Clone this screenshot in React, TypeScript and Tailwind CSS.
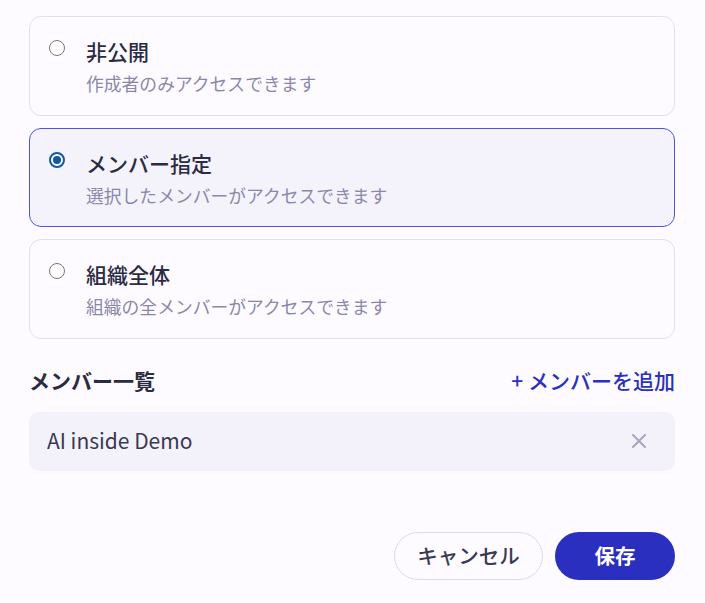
import React, { useState } from 'react'

type Scope = 'private' | 'members' | 'org'

const options: { id: Scope; title: string; desc: string }[] = [
  { id: 'private', title: '非公開', desc: '作成者のみアクセスできます' },
  { id: 'members', title: 'メンバー指定', desc: '選択したメンバーがアクセスできます' },
  { id: 'org', title: '組織全体', desc: '組織の全メンバーがアクセスできます' },
]

function Radio({ checked }: { checked: boolean }) {
  return (
    <span
      className={
        checked
          ? 'mt-[3px] flex h-4 w-4 shrink-0 items-center justify-center rounded-full border-2 border-[#11589f] bg-white'
          : 'mt-[3px] flex h-4 w-4 shrink-0 items-center justify-center rounded-full border-[1.5px] border-[#767676] bg-white'
      }
    >
      {checked && <span className="h-2 w-2 rounded-full bg-[#11589f]" />}
    </span>
  )
}

export default function App() {
  const [scope, setScope] = useState<Scope>('members')

  return (
    <div
      className="min-h-screen bg-[#fdfbff] pl-[29px] pr-[30px] pt-4 pb-[23px]"
      style={{ fontFamily: '"Noto Sans CJK JP", "Noto Sans", sans-serif' }}
    >
      <div className="flex flex-col gap-3">
        {options.map((o) => {
          const active = scope === o.id
          return (
            <button
              key={o.id}
              type="button"
              onClick={() => setScope(o.id)}
              className={
                active
                  ? 'flex items-start rounded-xl border border-[#4b56dc] bg-[#f4f3fc] pl-[19px] pt-5 pb-[19.5px] text-left'
                  : 'flex items-start rounded-xl border border-[#e1deee] bg-[#fdfbff] pl-[19px] pt-5 pb-[19.5px] text-left'
              }
            >
              <Radio checked={active} />
              <div className="ml-[21px] flex flex-col">
                <span className="text-[21px] leading-7 font-medium text-[#2c2b44]">{o.title}</span>
                <span className="mt-[6px] text-[17.8px] leading-6 text-[#8a88a8]">{o.desc}</span>
              </div>
            </button>
          )
        })}
      </div>

      <div className="mt-[27px] flex items-center justify-between">
        <h2 className="text-[21px] leading-7 font-bold text-[#2c2b3f]">メンバー一覧</h2>
        <button type="button" className="text-[21px] leading-7 font-medium text-[#2a30bf]">
          + メンバーを追加
        </button>
      </div>

      <div className="mt-[18px] flex h-[59px] items-center justify-between rounded-[10px] bg-[#f3f2fb] pl-[18px] pr-[29px]">
        <span className="text-[21px] text-[#3a3952]">AI inside Demo</span>
        <svg width="14" height="14" viewBox="0 0 14 14" className="text-[#a7a5bf]">
          <path d="M1 1L13 13M13 1L1 13" stroke="currentColor" strokeWidth="2" strokeLinecap="round" />
        </svg>
      </div>

      <div className="mt-[61px] flex justify-end gap-3">
        <button
          type="button"
          className="h-12 w-[149px] rounded-full border border-[#dcdaea] bg-[#fdfbff] text-[20.5px] font-medium text-[#3a3952]"
        >
          キャンセル
        </button>
        <button
          type="button"
          className="h-12 w-[120px] rounded-full bg-[#2a2fc0] text-[20.5px] font-bold text-white"
        >
          保存
        </button>
      </div>
    </div>
  )
}
